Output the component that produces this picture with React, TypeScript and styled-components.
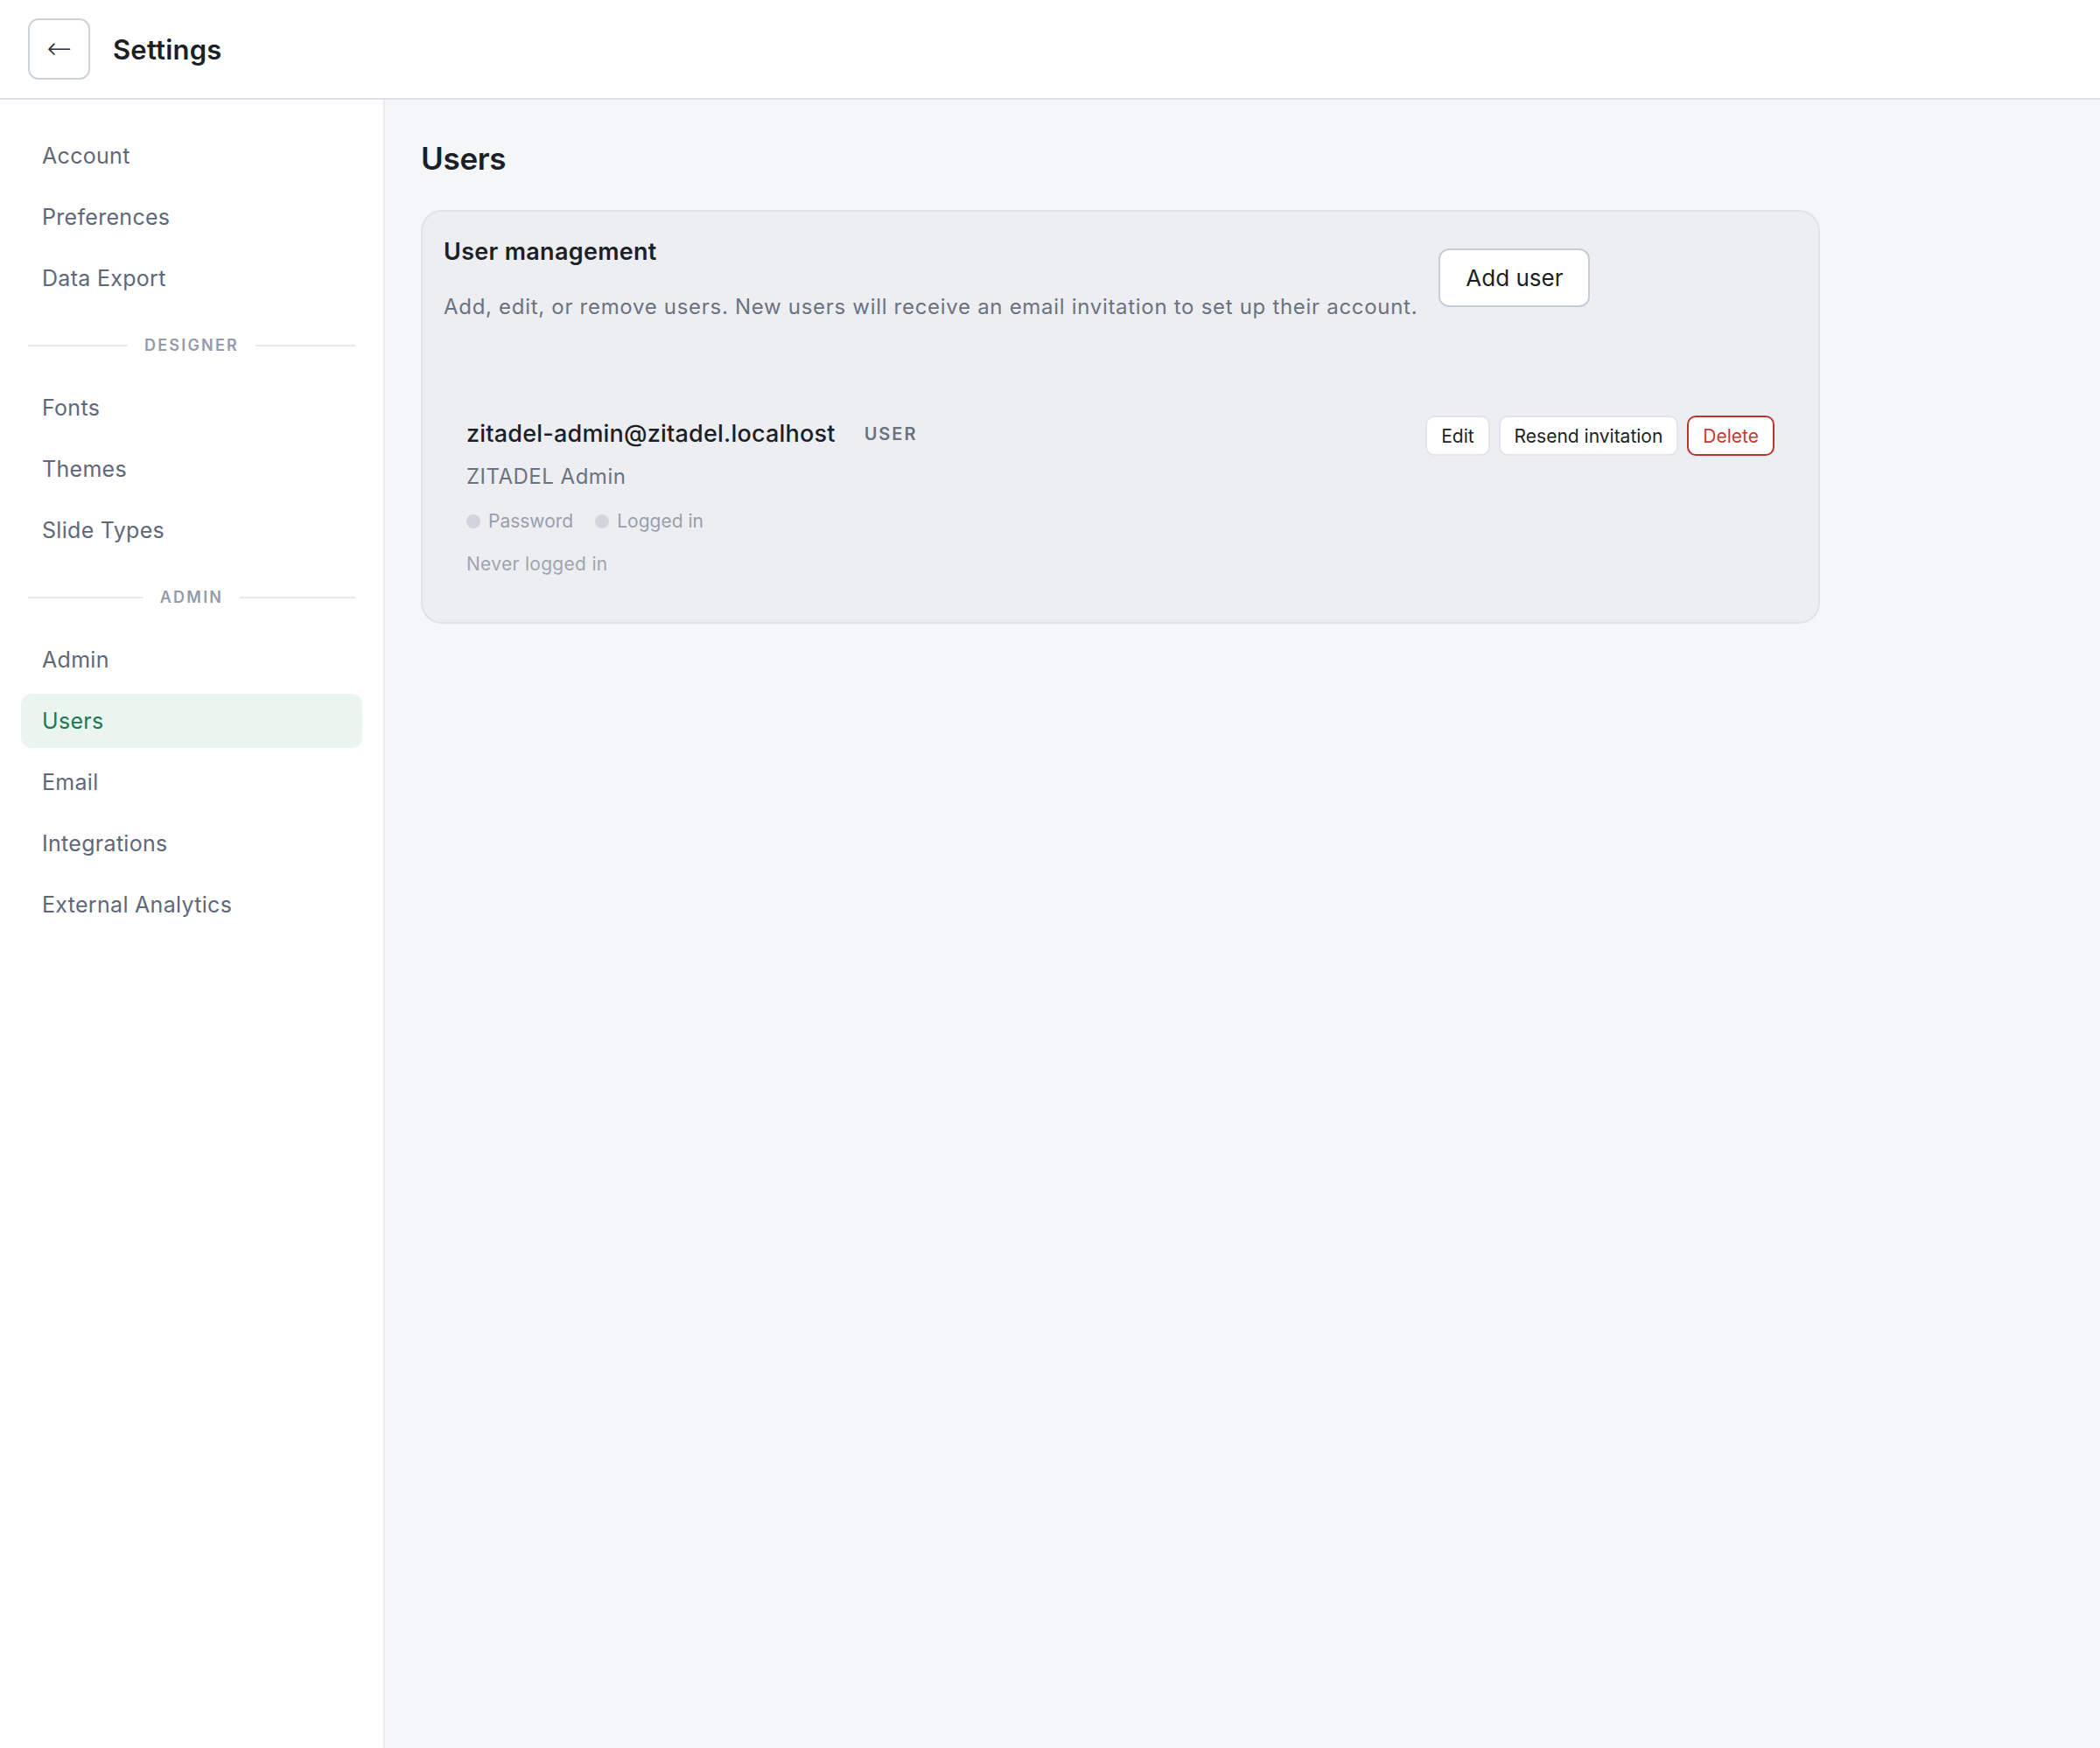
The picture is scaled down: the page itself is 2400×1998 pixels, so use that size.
import styled, { createGlobalStyle } from "styled-components"

const GlobalStyle = createGlobalStyle`
  html, body {
    margin: 0;
    padding: 0;
  }
  body {
    font-family: Inter, "Noto Sans", "Liberation Sans", sans-serif;
    color: #1c1f26;
    background: #f5f6f8;
    -webkit-font-smoothing: antialiased;
  }
  * {
    box-sizing: border-box;
  }
`

const Page = styled.div`
  min-height: 100vh;
  display: flex;
  flex-direction: column;
`

const TopBar = styled.header`
  height: 114px;
  flex-shrink: 0;
  display: flex;
  align-items: center;
  gap: 26px;
  padding: 0 32px 0;
  background: #fff;
  border-bottom: 2px solid #dfe0e7;
`

const BackButton = styled.button`
  width: 71px;
  height: 70px;
  display: flex;
  align-items: center;
  justify-content: center;
  background: #fff;
  border: 2px solid #cdd1dc;
  border-radius: 12px;
  color: #2a2e36;
  font-family: "DejaVu Sans", sans-serif;
  font-size: 34px;
  font-weight: 300;
  line-height: 1;
  padding: 0 0 2px;
  cursor: pointer;
`

const PageTitle = styled.h1`
  margin: 0;
  font-size: 31px;
  font-weight: 600;
  color: #1c1f26;
  letter-spacing: 0.2px;
`

const Body = styled.div`
  flex: 1;
  display: flex;
`

const Sidebar = styled.nav`
  width: 440px;
  flex-shrink: 0;
  background: #fff;
  border-right: 2px solid #ebecf0;
  padding: 33px 24px;
  display: flex;
  flex-direction: column;
  gap: 8px;
`

const NavItem = styled.a<{ $active?: boolean }>`
  height: 62px;
  display: flex;
  align-items: center;
  padding: 0 24px;
  border-radius: 12px;
  font-size: 25px;
  letter-spacing: 0.3px;
  text-decoration: none;
  color: ${(p) => (p.$active ? "#1e7a52" : "#5f6878")};
  background: ${(p) => (p.$active ? "#ebf5f0" : "transparent")};
  cursor: pointer;
`

const SectionLabel = styled.div`
  height: 70px;
  padding-top: 5px;
  display: flex;
  align-items: center;
  gap: 19px;
  margin: 0 8px;
  font-size: 18px;
  font-weight: 600;
  letter-spacing: 2.2px;
  color: #959ba8;
  &::before,
  &::after {
    content: "";
    flex: 1;
    height: 2px;
    background: #e8e9ed;
  }
`

const Main = styled.main`
  flex: 1;
  padding: 44px 41px;
`

const Heading = styled.h2`
  margin: 0 0 36px;
  font-size: 35px;
  line-height: 46px;
  font-weight: 600;
  letter-spacing: -0.3px;
  color: #1c1f26;
`

const Card = styled.section`
  max-width: 1599px;
  background: #edeef2;
  border: 2px solid #e1e3e8;
  border-radius: 24px;
  padding: 24px;
`

const CardHeader = styled.div`
  display: flex;
  align-items: center;
  gap: 24px;
`

const CardTitle = styled.h3`
  margin: 3px 0 0;
  font-size: 27px;
  line-height: 38px;
  font-weight: 600;
  letter-spacing: 0.3px;
  color: #1c1f26;
`

const CardText = styled.p`
  margin: 26px 0 0;
  font-size: 24px;
  line-height: 36px;
  letter-spacing: 0.7px;
  color: #6b7280;
`

const Button = styled.button<{ $size?: "lg" | "sm"; $danger?: boolean }>`
  flex-shrink: 0;
  background: #fff;
  font-family: inherit;
  white-space: nowrap;
  cursor: pointer;
  height: ${(p) => (p.$size === "lg" ? "67px" : "46px")};
  padding: ${(p) => (p.$size === "lg" ? "0 29px" : "0 16px")};
  font-size: ${(p) => (p.$size === "lg" ? "26px" : "21px")};
  border-radius: ${(p) => (p.$size === "lg" ? "12px" : "10px")};
  color: ${(p) => (p.$danger ? "#c9372e" : "#1c1f26")};
  border: 2px solid
    ${(p) => (p.$danger ? "#b9362e" : p.$size === "lg" ? "#c8ccd6" : "#e3e5ea")};
`

const UserItem = styled.div`
  margin-top: 82px;
  padding: 24px 24px 24px 24px;
  border: 2px solid transparent;
  display: flex;
  justify-content: space-between;
  align-items: flex-start;
`

const UserInfo = styled.div`
  display: flex;
  flex-direction: column;
`

const EmailRow = styled.div`
  display: flex;
  align-items: center;
  gap: 33px;
`

const Email = styled.span`
  font-size: 27px;
  line-height: 38px;
  font-weight: 500;
  letter-spacing: 0.2px;
  color: #1c1f26;
`

const RoleBadge = styled.span`
  font-size: 20px;
  font-weight: 600;
  letter-spacing: 2px;
  color: #6b7280;
`

const DisplayName = styled.div`
  margin-top: 12px;
  font-size: 24px;
  line-height: 36px;
  letter-spacing: 0.5px;
  color: #6b7280;
`

const StatusRow = styled.div`
  margin-top: 17px;
  display: flex;
  align-items: center;
  gap: 25px;
`

const Status = styled.span`
  display: flex;
  align-items: center;
  gap: 9px;
  font-size: 21px;
  line-height: 32px;
  color: #9aa0ab;
  &::before {
    content: "";
    width: 16px;
    height: 16px;
    border-radius: 50%;
    background: #d2d4db;
  }
`

const LastLogin = styled.div`
  margin-top: 17px;
  font-size: 21px;
  line-height: 32px;
  letter-spacing: 0.3px;
  color: #a0a5af;
`

const Actions = styled.div`
  display: flex;
  gap: 10px;
  margin-top: -2px;
`

const general = ["Account", "Preferences", "Data Export"]
const designer = ["Fonts", "Themes", "Slide Types"]
const admin = ["Admin", "Users", "Email", "Integrations", "External Analytics"]

export default function App() {
  return (
    <>
      <GlobalStyle />
      <Page>
        <TopBar>
          <BackButton aria-label="Back">←</BackButton>
          <PageTitle>Settings</PageTitle>
        </TopBar>
        <Body>
          <Sidebar>
            {general.map((item) => (
              <NavItem key={item}>{item}</NavItem>
            ))}
            <SectionLabel>DESIGNER</SectionLabel>
            {designer.map((item) => (
              <NavItem key={item}>{item}</NavItem>
            ))}
            <SectionLabel>ADMIN</SectionLabel>
            {admin.map((item) => (
              <NavItem key={item} $active={item === "Users"}>
                {item}
              </NavItem>
            ))}
          </Sidebar>
          <Main>
            <Heading>Users</Heading>
            <Card>
              <CardHeader>
                <div>
                  <CardTitle>User management</CardTitle>
                  <CardText>
                    Add, edit, or remove users. New users will receive an email invitation to set up
                    their account.
                  </CardText>
                </div>
                <Button $size="lg">Add user</Button>
              </CardHeader>
              <UserItem>
                <UserInfo>
                  <EmailRow>
                    <Email>zitadel-admin@zitadel.localhost</Email>
                    <RoleBadge>USER</RoleBadge>
                  </EmailRow>
                  <DisplayName>ZITADEL Admin</DisplayName>
                  <StatusRow>
                    <Status>Password</Status>
                    <Status>Logged in</Status>
                  </StatusRow>
                  <LastLogin>Never logged in</LastLogin>
                </UserInfo>
                <Actions>
                  <Button $size="sm">Edit</Button>
                  <Button $size="sm">Resend invitation</Button>
                  <Button $size="sm" $danger>
                    Delete
                  </Button>
                </Actions>
              </UserItem>
            </Card>
          </Main>
        </Body>
      </Page>
    </>
  )
}
